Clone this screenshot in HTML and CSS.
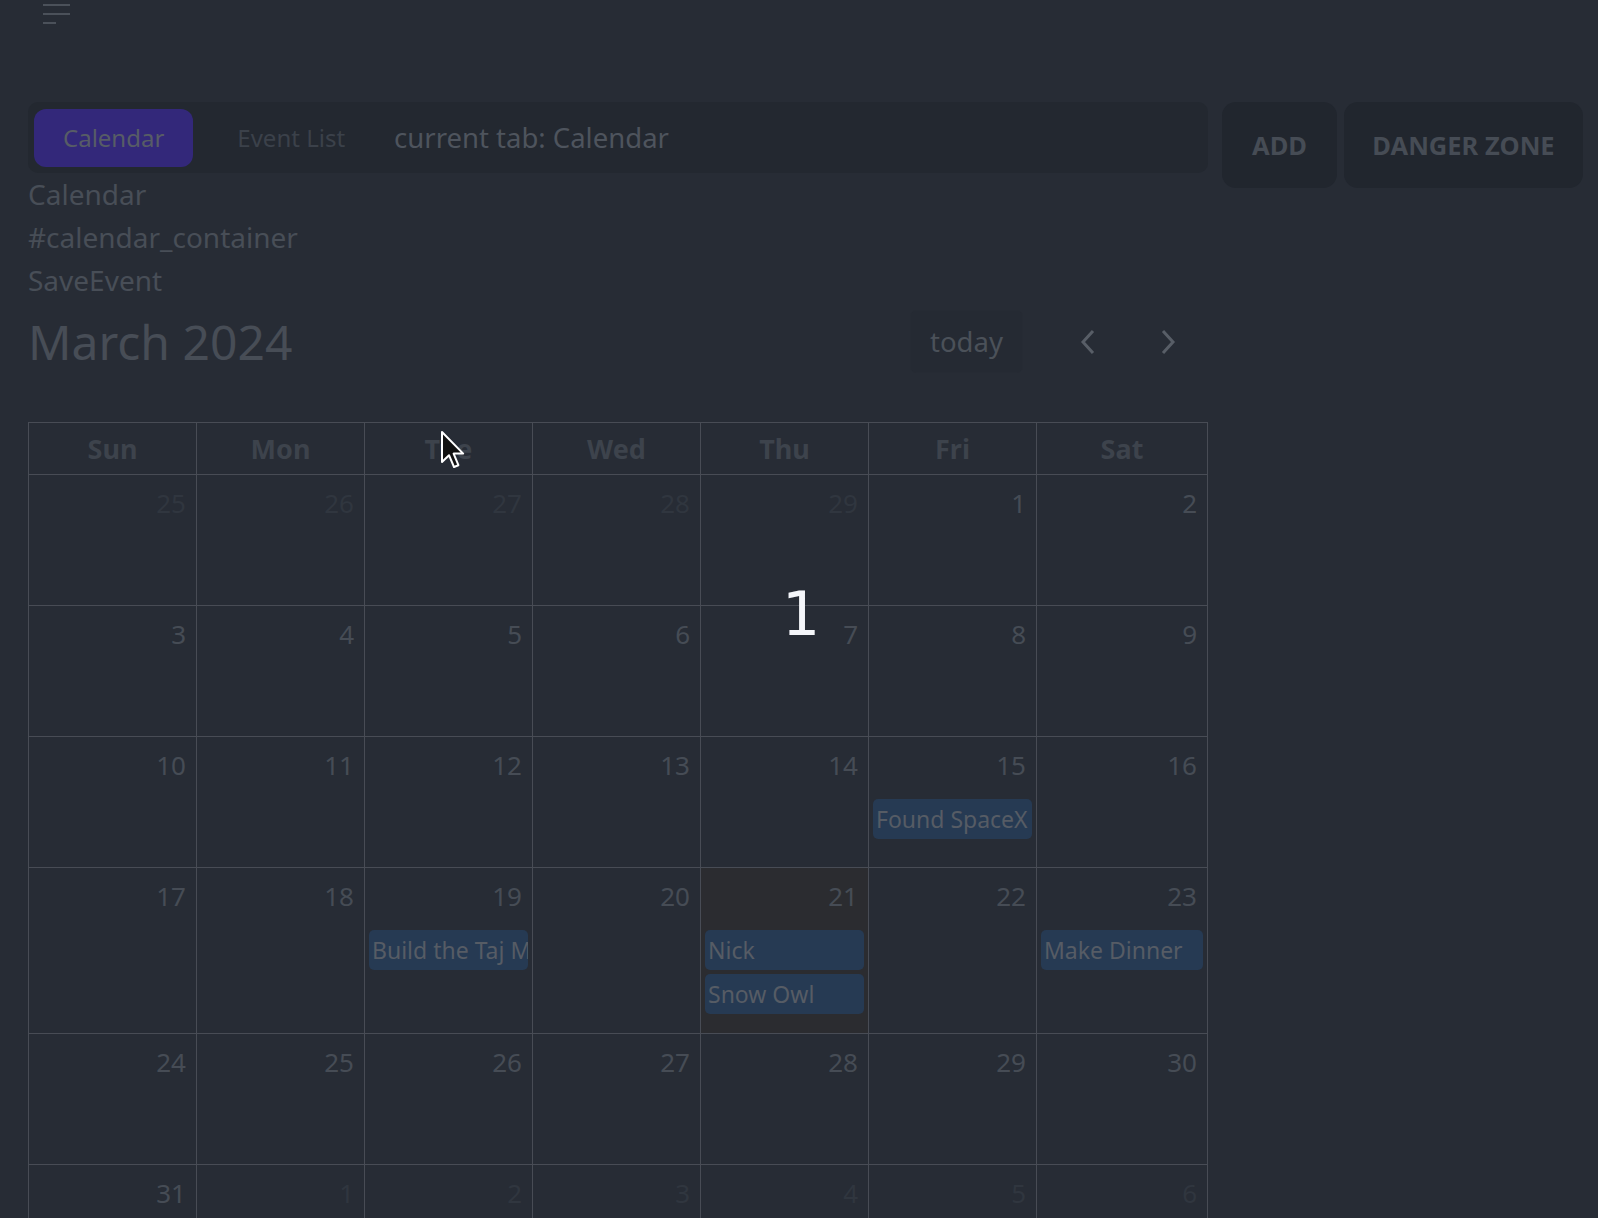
FILE: index.html
```html
<!DOCTYPE html>
<html lang="en">
<head>
<meta charset="utf-8">
<title>Calendar</title>
<link rel="stylesheet" href="styles.css">
</head>
<body>
<div class="page">
  <header class="topbar">
    <button class="menu" aria-label="menu"><span></span><span></span><span class="short"></span></button>
  </header>
  <div class="main">
    <div class="left">
      <div class="tabs">
        <button class="tab active">Calendar</button>
        <button class="tab">Event List</button>
        <span class="current">current tab: Calendar</span>
      </div>
      <div class="info">
        <div>Calendar</div>
        <div>#calendar_container</div>
        <div>SaveEvent</div>
      </div>
      <div class="cal">
        <div class="toolbar">
          <h2 class="title">March 2024</h2>
          <div class="nav">
            <button class="today">today</button>
            <button class="arrow" aria-label="prev"><svg width="16" height="26" viewBox="0 0 16 26"><path d="M13 2 L3 13 L13 24" fill="none" stroke="currentColor" stroke-width="3"/></svg></button>
            <button class="arrow" aria-label="next"><svg width="16" height="26" viewBox="0 0 16 26"><path d="M3 2 L13 13 L3 24" fill="none" stroke="currentColor" stroke-width="3"/></svg></button>
          </div>
        </div>
        <table class="grid">
          <colgroup>
            <col class="c"><col class="c"><col class="c"><col class="c"><col class="c"><col class="c"><col>
          </colgroup>
          <thead>
            <tr><th>Sun</th><th>Mon</th><th>Tue</th><th>Wed</th><th>Thu</th><th>Fri</th><th>Sat</th></tr>
          </thead>
          <tbody>
            <tr class="wk">
              <td class="other"><div class="num">25</div></td>
              <td class="other"><div class="num">26</div></td>
              <td class="other"><div class="num">27</div></td>
              <td class="other"><div class="num">28</div></td>
              <td class="other"><div class="num">29</div></td>
              <td><div class="num">1</div></td>
              <td><div class="num">2</div></td>
            </tr>
            <tr class="wk">
              <td><div class="num">3</div></td>
              <td><div class="num">4</div></td>
              <td><div class="num">5</div></td>
              <td><div class="num">6</div></td>
              <td><div class="num">7</div></td>
              <td><div class="num">8</div></td>
              <td><div class="num">9</div></td>
            </tr>
            <tr class="wk">
              <td><div class="num">10</div></td>
              <td><div class="num">11</div></td>
              <td><div class="num">12</div></td>
              <td><div class="num">13</div></td>
              <td><div class="num">14</div></td>
              <td><div class="num">15</div><div class="ev">Found SpaceX</div></td>
              <td><div class="num">16</div></td>
            </tr>
            <tr class="wk tall">
              <td><div class="num">17</div></td>
              <td><div class="num">18</div></td>
              <td><div class="num">19</div><div class="ev">Build the Taj Mahal</div></td>
              <td><div class="num">20</div></td>
              <td class="is-today"><div class="num">21</div><div class="ev">Nick</div><div class="ev">Snow Owl</div></td>
              <td><div class="num">22</div></td>
              <td><div class="num">23</div><div class="ev">Make Dinner</div></td>
            </tr>
            <tr class="wk">
              <td><div class="num">24</div></td>
              <td><div class="num">25</div></td>
              <td><div class="num">26</div></td>
              <td><div class="num">27</div></td>
              <td><div class="num">28</div></td>
              <td><div class="num">29</div></td>
              <td><div class="num">30</div></td>
            </tr>
            <tr class="wk">
              <td><div class="num">31</div></td>
              <td class="other"><div class="num">1</div></td>
              <td class="other"><div class="num">2</div></td>
              <td class="other"><div class="num">3</div></td>
              <td class="other"><div class="num">4</div></td>
              <td class="other"><div class="num">5</div></td>
              <td class="other"><div class="num">6</div></td>
            </tr>
          </tbody>
        </table>
      </div>
    </div>
    <div class="actions">
      <button class="act add">ADD</button>
      <button class="act danger">DANGER ZONE</button>
    </div>
  </div>
</div>
<div class="click-mark">1</div>
<svg class="cursor" width="26" height="40" viewBox="0 0 13 20"><path d="M1 1 L1 16 L4.5 12.6 L7 18.5 L9.2 17.6 L6.8 11.8 L11.6 11.8 Z" fill="#111" stroke="#fff" stroke-width="1" stroke-linejoin="round"/></svg>
</body>
</html>
```

FILE: styles.css
```css
html, body {
  margin: 0;
  padding: 0;
  background: #272c35;
}
body {
  font-family: "Noto Sans", "Open Sans", sans-serif;
  font-size: 26px;
  color: #484e57;
  height: 1218px;
  overflow: hidden;
  position: relative;
}
button {
  font-family: inherit;
  border: none;
  background: none;
  color: inherit;
  padding: 0;
  cursor: pointer;
}
.page {
  padding: 0 15px 0 28px;
}
.topbar {
  height: 98px;
}
.menu {
  margin: 4px 0 0 15px;
  display: flex;
  flex-direction: column;
  gap: 7px;
  width: 27px;
}
.menu span {
  display: block;
  height: 2px;
  width: 27px;
  background: #4b515a;
}
.menu span.short {
  width: 13px;
}
.main {
  display: flex;
  align-items: flex-start;
  gap: 14px;
}
.left {
  flex: 1;
  min-width: 0;
}
.tabs {
  height: 71px;
  box-sizing: border-box;
  background: #232830;
  border-radius: 10px;
  display: flex;
  align-items: center;
  padding: 0 6px;
  gap: 15px;
}
.tab {
  height: 58px;
  padding: 0 29px;
  font-size: 24px;
  border-radius: 12px;
  color: #3b414a;
}
.tab.active {
  background: #33287a;
  color: #575c66;
}
.current {
  font-size: 27.5px;
  color: #4e545d;
  margin-left: 5px;
}
.info {
  line-height: 43px;
  font-size: 28px;
  color: #484e57;
}
.toolbar {
  display: flex;
  align-items: center;
  justify-content: space-between;
  height: 63px;
  margin: 8px 0 49px;
}
.title {
  margin: 0;
  font-size: 48px;
  font-weight: 400;
  color: #474d56;
  line-height: 63px;
}
.nav {
  display: flex;
  align-items: center;
  height: 63px;
}
.today {
  height: 63px;
  width: 113px;
  background: #252a33;
  border: 1px solid #262b34;
  border-radius: 6px;
  color: #4b5159;
  font-size: 27.5px;
  margin-right: 25px;
}
.arrow {
  width: 80px;
  height: 63px;
  color: #585e67;
  display: flex;
  align-items: center;
  justify-content: center;
}
.grid {
  width: 100%;
  border-collapse: collapse;
  table-layout: fixed;
}
.grid col.c {
  width: 168px;
}
.grid th, .grid td {
  border: 1px solid #484c55;
  padding: 0;
}
.grid th {
  height: 51px;
  font-weight: 700;
  color: #3d434c;
  font-size: 27px;
}
.grid td {
  vertical-align: top;
  height: 130px;
}
.grid tr.tall td {
  height: 165px;
}
.grid td.is-today {
  background: #2b2c30;
}
.num {
  text-align: right;
  padding: 10px 10px 0 0;
  height: 42px;
  line-height: 36px;
  color: #464c55;
}
.other .num {
  color: #30363f;
}
.ev {
  margin: 10px 4px 0 4px;
  height: 40px;
  line-height: 40px;
  background: #263a53;
  border-radius: 5px;
  padding: 0 3px;
  font-size: 23px;
  color: #565c65;
  white-space: nowrap;
  overflow: hidden;
}
.ev + .ev {
  margin-top: 4px;
}
.actions {
  display: flex;
  gap: 7px;
}
.act {
  height: 86px;
  border-radius: 14px;
  background: #21262e;
  font-weight: 700;
  font-size: 25.5px;
  color: #464c55;
}
.add {
  width: 115px;
}
.danger {
  width: 239px;
}
.click-mark {
  position: absolute;
  left: 782px;
  top: 584px;
  font-family: "DejaVu Sans", sans-serif;
  font-size: 60px;
  color: #f4f6fa;
  line-height: 1;
}
.cursor {
  position: absolute;
  left: 440px;
  top: 430px;
}
```
